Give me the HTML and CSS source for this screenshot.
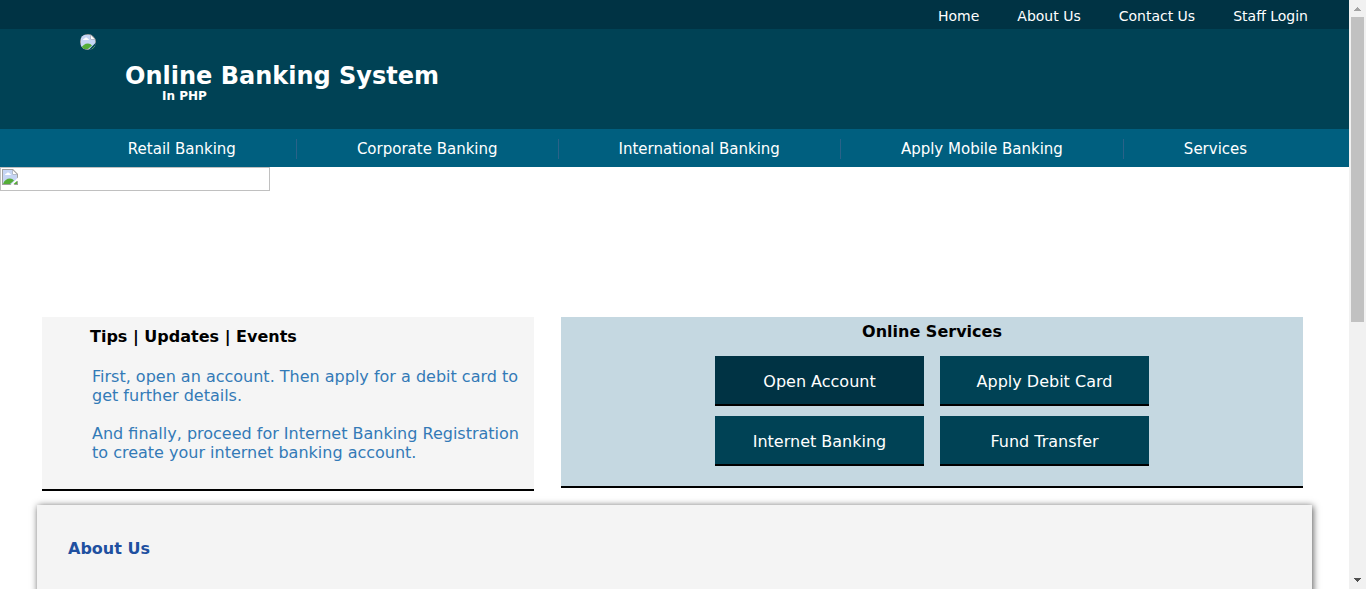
FILE: index.html
```html
<!DOCTYPE html>
<html lang="en">
<head>
<meta charset="utf-8">
<title>Online Banking System</title>
<link rel="stylesheet" href="styles.css">
</head>
<body>
<svg class="defs" aria-hidden="true">
  <symbol id="missing" viewBox="0 0 16 16">
    <path d="M0 0H11L16 5V16H0Z" fill="#a0a0a0"/>
    <path d="M1 1H10.500V5.500H15V15H1Z" fill="#c6d5f4"/>
    <path d="M11 1.500V5H14.500Z" fill="#fff"/>
    <path d="M3 6Q3 4.500 4.500 4.500Q5 3 6.500 3.500Q8 4 8 5Q9 5 9 6Z" fill="#fff"/>
    <path d="M1 15Q3 9.500 8 9.500Q10.500 9.500 12 11.500L8 15Z" fill="#55ad37"/>
    <path class="slash" d="M8.500 16L16 8.500V11.500L11.500 16Z"/>
    <path d="M11.500 15L15 12V15Z" fill="#55ad37"/>
  </symbol>
</svg>
<div class="page">
  <header>
    <nav class="top-nav">
      <a href="#">Home</a>
      <a href="#">About Us</a>
      <a href="#">Contact Us</a>
      <a href="#">Staff Login</a>
    </nav>
    <div class="brand">
      <svg class="logo" role="img" aria-label="Logo"><use href="#missing"/></svg>
      <div>
        <h1>Online Banking System</h1>
        <p class="tagline">In PHP</p>
      </div>
    </div>
    <nav class="main-nav">
      <a href="#">Retail Banking</a>
      <a href="#">Corporate Banking</a>
      <a href="#">International Banking</a>
      <a href="#">Apply Mobile Banking</a>
      <a href="#">Services</a>
    </nav>
  </header>
  <div class="banner">
    <div class="slide"><svg role="img" aria-label="Banner"><use href="#missing"/></svg></div>
  </div>
  <main>
    <div class="panels">
      <section class="tips">
        <h2>Tips | Updates | Events</h2>
        <p>First, open an account. Then apply for a debit card to get further details.</p>
        <p>And finally, proceed for Internet Banking Registration to create your internet banking account.</p>
      </section>
      <section class="services">
        <h2>Online Services</h2>
        <div class="buttons">
          <button type="button" class="active">Open Account</button>
          <button type="button">Apply Debit Card</button>
          <button type="button">Internet Banking</button>
          <button type="button">Fund Transfer</button>
        </div>
      </section>
    </div>
    <section class="about">
      <h2>About Us</h2>
    </section>
  </main>
</div>
<div class="scrollbar" aria-hidden="true">
  <svg viewBox="0 0 17 17"><path d="M5 11H12V10H11V9H10V8H9V7H8V8H7V9H6V10H5Z" fill="#a3a3a3"/></svg>
  <div class="track"><div class="thumb"></div></div>
  <svg viewBox="0 0 17 17"><path d="M5 6H12V7H11V8H10V9H9V10H8V9H7V8H6V7H5Z" fill="#505050"/></svg>
</div>
</body>
</html>
```
FILE: styles.css
```css
* { box-sizing: border-box; }
body {
  margin: 0;
  height: 100vh;
  display: flex;
  overflow: hidden;
  background: #fff;
  font-family: Verdana, "DejaVu Sans", sans-serif;
  font-size: 16px;
  line-height: 19px;
}
h1, h2, p { margin: 0; }
h2 { font-size: 16px; line-height: 22px; }
a { color: #fff; text-decoration: none; }
.defs { position: absolute; width: 0; height: 0; }
.page { flex: 1; min-width: 0; overflow: hidden; }

.top-nav {
  display: flex;
  justify-content: flex-end;
  gap: 38px;
  padding: 7px 41px 3px 0;
  background: #003344;
  font-size: 14px;
}
.brand {
  display: flex;
  gap: 29px;
  height: 100px;
  padding: 5px 80px;
  background: #004255;
  color: #fff;
}
.logo { width: 16px; height: 16px; border-radius: 50%; fill: #004255; }
.brand h1 { margin-top: 27px; font-size: 24px; line-height: 30px; }
.tagline { padding-left: 37px; font-size: 12px; font-weight: bold; line-height: 10px; }
.main-nav {
  display: flex;
  justify-content: center;
  padding: 10px 0 8px 26px;
  background: #005f7f;
  font-size: 15px;
  line-height: 20px;
}
.main-nav a { padding: 0 60px; }
.main-nav a + a { border-left: 1px solid #2a6288; }

.banner { height: 150px; }
.slide { width: 20%; height: 24px; padding: 2px; border: 1px solid #c0c0c0; }
.slide svg { display: block; width: 16px; height: 16px; margin: -1px; fill: #fff; }

.panels {
  display: grid;
  grid-template-columns: 492fr 742fr;
  align-items: start;
  gap: 27px;
  padding: 0 46px 14px 42px;
}
.tips {
  display: grid;
  gap: 19px;
  padding: 9px 10px 27px 50px;
  border-bottom: 2px solid #000;
  background: #f5f5f5;
  color: #337ab7;
}
.tips h2 { margin-left: -2px; color: #000; }
.services {
  padding: 4px 0 20px;
  border-bottom: 2px solid #000;
  background: #c5d8e1;
  text-align: center;
}
.buttons {
  display: grid;
  grid-template-columns: 209px 209px;
  justify-content: center;
  gap: 10px 16px;
  margin-top: 13px;
}
button {
  height: 50px;
  padding: 2px 0 0;
  border: 0;
  border-bottom: 2px solid #000;
  background: #004255;
  color: #fff;
  font: inherit;
}
button.active { background: #003344; }
.about {
  min-height: 400px;
  margin: 0 37px;
  padding: 33px 31px;
  background: #f4f4f4;
  box-shadow: 1px 1px 7px #555;
  color: #1f50a0;
}

.scrollbar { width: 17px; display: flex; flex-direction: column; background: #f1f1f1; }
.scrollbar svg { display: block; width: 17px; height: 17px; }
.track { flex: 1; padding: 0 2px; }
.thumb { height: 55%; background: #c1c1c1; }
```
